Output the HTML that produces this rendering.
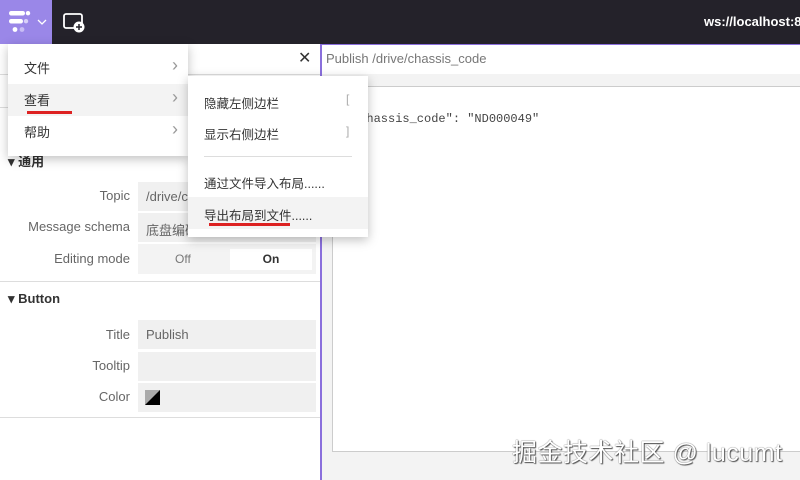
<!DOCTYPE html>
<html><head><meta charset="utf-8"><style>
*{margin:0;padding:0;box-sizing:border-box}
body{width:800px;height:480px;overflow:hidden;position:relative;background:#fff;font-family:"Liberation Sans","Noto Sans CJK SC",sans-serif;color:#333}
.abs{position:absolute}
.lbl{position:absolute;left:0;width:130px;font-size:13px;color:#666;text-align:right}
.inp{position:absolute;left:138px;width:178px;height:29px;background:#f0f0f0;font-size:13px;color:#666;padding:7px 8px}
.mi{position:absolute;left:0;width:180px;height:32px;font-size:13px;color:#333;padding:6px 16px}
.chev{position:absolute;right:10px;top:3px;color:#999;font-size:18px}
.si{position:absolute;left:16px;font-size:12.5px;color:#333}
</style></head><body>
<div class="abs" style="left:0;top:0;width:800px;height:44px;background:#24222a"></div>
<div class="abs" style="left:0;top:0;width:52px;height:44px;background:#9a87e8"></div>
<svg class="abs" style="left:6px;top:10px" width="46" height="24" viewBox="0 0 46 24">
<rect x="3" y="1" width="16" height="4.5" rx="2.2" fill="#fff"/><circle cx="22" cy="3.2" r="2.2" fill="#fff"/>
<rect x="3" y="9" width="14" height="4.5" rx="2.2" fill="#fff"/><circle cx="20" cy="11.2" r="2.2" fill="#d8d0f8"/>
<circle cx="9" cy="19.5" r="2.4" fill="#fff"/><circle cx="16" cy="19.5" r="2.4" fill="#c8bdf4"/>
<path d="M32 10l4 4 4-4" stroke="#fff" stroke-width="1.3" fill="none"/></svg>
<svg class="abs" style="left:63px;top:13px" width="24" height="20" viewBox="0 0 24 20"><rect x="1" y="1" width="18" height="14" rx="2" stroke="#fff" stroke-width="1.8" fill="none"/><circle cx="16" cy="14" r="5.5" fill="#fff"/><path d="M16 11v6M13 14h6" stroke="#24222a" stroke-width="1.5"/></svg>
<div class="abs" style="left:704px;top:14px;font-size:13px;color:#fff;font-weight:bold">ws://localhost:87</div>
<div class="abs" style="left:0;top:44px;width:320px;height:436px;background:#fff"></div>
<div class="abs" style="left:298px;top:48px;font-size:16px;color:#333">✕</div>
<div class="abs" style="left:0;top:74px;width:320px;height:1px;background:#ddd"></div>
<div class="abs" style="left:0;top:107px;width:320px;height:1px;background:#ddd"></div>
<div class="abs" style="left:8px;top:151px;font-size:13px;font-weight:bold;color:#333">▾ 通用</div>
<div class="lbl" style="top:188px">Topic</div><div class="inp" style="top:182px">/drive/c</div>
<div class="lbl" style="top:219px">Message schema</div><div class="inp" style="top:213px">底盘编码</div>
<div class="lbl" style="top:251px">Editing mode</div>
<div class="abs" style="left:138px;top:244px;width:178px;height:30px;background:#f3f3f3"></div>
<div class="abs" style="left:175px;top:252px;font-size:12px;color:#777">Off</div>
<div class="abs" style="left:230px;top:249px;width:82px;height:21px;background:#fff;font-size:12px;font-weight:bold;text-align:center;padding-top:3px">On</div>
<div class="abs" style="left:0;top:281px;width:320px;height:1px;background:#ddd"></div>
<div class="abs" style="left:8px;top:291px;font-size:13px;font-weight:bold;color:#333">▾ Button</div>
<div class="lbl" style="top:327px">Title</div><div class="inp" style="top:320px;height:29px">Publish</div>
<div class="lbl" style="top:358px">Tooltip</div><div class="inp" style="top:352px"></div>
<div class="lbl" style="top:389px">Color</div><div class="inp" style="top:383px"></div>
<svg class="abs" style="left:145px;top:390px" width="15" height="15"><rect x="0" y="0" width="15" height="15" fill="#000"/><path d="M0 0h15L0 15z" fill="#aaa"/></svg>
<div class="abs" style="left:0;top:417px;width:320px;height:1px;background:#ddd"></div>
<div class="abs" style="left:320px;top:44px;width:480px;height:436px;background:#f3f3f3;border-left:2px solid #8a6fdc;border-top:1px solid #8a6fdc"></div>
<div class="abs" style="left:322px;top:45px;width:478px;height:29px;background:#fff"></div>
<div class="abs" style="left:326px;top:51px;font-size:13px;color:#777">Publish /drive/chassis_code</div>
<div class="abs" style="left:322px;top:86px;width:478px;height:1px;background:#ccc"></div>
<div class="abs" style="left:332px;top:87px;width:470px;height:365px;background:#fff;border-left:1px solid #ccc;border-bottom:1px solid #ccc"></div>
<div class="abs" style="left:352px;top:112px;font-family:'Liberation Mono',monospace;font-size:12px;color:#444">"chassis_code": "ND000049"</div>
<div class="abs" style="left:512px;top:433px;font-size:25px;color:#fff;text-shadow:0 0 1px #333,1px 1px 1px #555;letter-spacing:0.5px">掘金技术社区 @ lucumt</div>
<div class="abs" style="left:8px;top:44px;width:180px;height:112px;background:#fff;box-shadow:0 3px 10px rgba(0,0,0,.25)">
 <div class="mi" style="top:8px">文件<span class="chev">›</span></div>
 <div class="mi" style="top:40px;background:#f3f3f3">查看<span class="chev">›</span></div>
 <div class="mi" style="top:72px">帮助<span class="chev">›</span></div>
</div>
<div class="abs" style="left:27px;top:111px;width:45px;height:3px;background:#d22"></div>
<div class="abs" style="left:188px;top:76px;width:180px;height:161px;background:#fff;box-shadow:0 3px 10px rgba(0,0,0,.25)">
 <div class="si" style="top:17px">隐藏左侧边栏</div><div class="abs" style="left:158px;top:16px;color:#aaa;font-size:12px">[</div>
 <div class="si" style="top:48px">显示右侧边栏</div><div class="abs" style="left:158px;top:48px;color:#aaa;font-size:12px">]</div>
 <div class="abs" style="left:16px;top:80px;width:148px;height:1px;background:#ddd"></div>
 <div class="si" style="top:97px">通过文件导入布局......</div>
 <div class="abs" style="left:0;top:121px;width:180px;height:32px;background:#f3f3f3"></div>
 <div class="si" style="top:129px">导出布局到文件......</div>
</div>
<div class="abs" style="left:209px;top:223px;width:81px;height:3px;background:#d22"></div>
</body></html>
